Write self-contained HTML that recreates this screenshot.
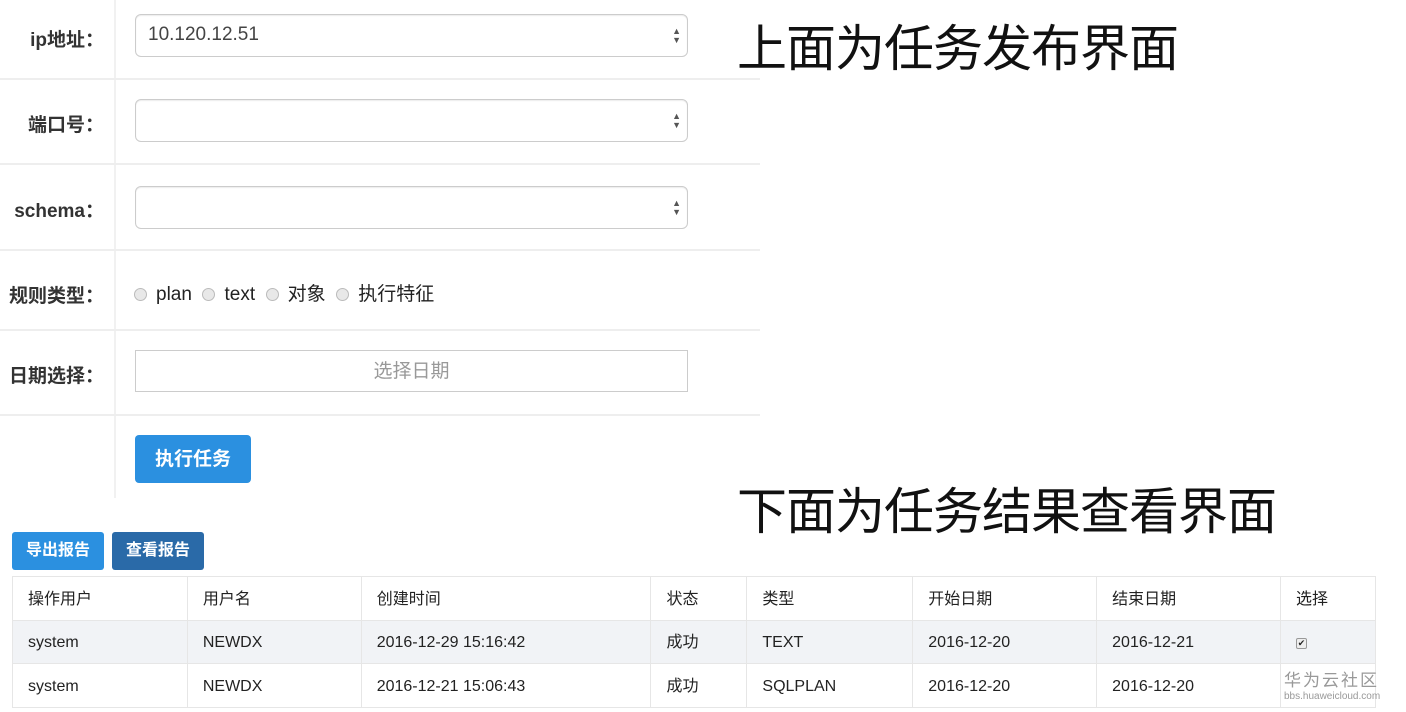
<!DOCTYPE html>
<html style="overflow:hidden;height:712px"><head><meta charset="utf-8"><style>
*{margin:0;padding:0;box-sizing:border-box}
body{width:1406px;height:712px;background:#fff;position:relative;overflow:hidden;font-family:"Liberation Sans","Noto Sans CJK SC",sans-serif;color:#333}
.a{position:absolute}
.hl{position:absolute;left:0;width:760px;height:2px;background:#eee}
.lbl{position:absolute;right:1302px;font-size:19px;font-weight:bold;color:#333;white-space:nowrap;font-family:"Noto Sans CJK SC","Liberation Sans",sans-serif;line-height:26px}
.lbl span{font-family:"Liberation Sans",sans-serif}
.sel{position:absolute;left:135px;width:553px;height:43px;border:1px solid #ccc;border-radius:6px;box-shadow:inset 0 1px 1px rgba(0,0,0,.08);font-size:19px;padding:9px 12px;color:#444}
.arr{position:absolute;right:6px;top:12px;font-size:9px;line-height:9px;color:#555}
.big{position:absolute;left:737px;font-size:50px;color:#111;white-space:nowrap;letter-spacing:-1px;line-height:60px}
.btn{position:absolute;color:#fff;font-size:16px;font-weight:bold;text-align:center;border-radius:3px}
table{position:absolute;left:12px;top:576px;border-collapse:collapse;font-size:16px;width:1364px}
td{border:1px solid #e6e6e6;padding:3px 15px 0;height:43.5px;line-height:38px;vertical-align:middle;color:#222;white-space:nowrap}
tr.s td{background:#f1f3f6}
.rd{display:inline-block;width:13px;height:13px;border-radius:50%;border:1px solid #bbb;background:#e8e8e8;vertical-align:-1px;margin-right:9px}
</style></head><body>
<div class="a" style="left:114px;top:0;width:2px;height:498px;background:#f1f1f1"></div>
<div class="hl" style="top:78px"></div><div class="hl" style="top:163px"></div><div class="hl" style="top:249px"></div><div class="hl" style="top:329px"></div><div class="hl" style="top:414px"></div>
<div class="lbl" style="top:26px"><span>ip</span>地址：</div>
<div class="lbl" style="top:111px">端口号：</div>
<div class="lbl" style="top:197px"><span>schema</span>：</div>
<div class="lbl" style="top:282px">规则类型：</div>
<div class="lbl" style="top:362px">日期选择：</div>
<div class="sel" style="top:14px">10.120.12.51<div class="arr">▲<br>▼</div></div>
<div class="sel" style="top:99px"><div class="arr">▲<br>▼</div></div>
<div class="sel" style="top:186px"><div class="arr">▲<br>▼</div></div>
<div class="a" style="left:134px;top:279px;font-size:19px;color:#222;white-space:nowrap"><span class="rd"></span>plan&nbsp; <span class="rd"></span>text&nbsp; <span class="rd"></span>对象&nbsp; <span class="rd"></span>执行特征</div>
<div class="a" style="left:135px;top:350px;width:553px;height:42px;border:1px solid #ccc;text-align:center;font-size:19px;color:#999;line-height:42px">选择日期</div>
<div class="btn" style="left:135px;top:435px;width:116px;height:48px;background:#2b90e0;font-size:19px;line-height:50px;border-radius:4px">执行任务</div>
<div class="big" style="top:19px">上面为任务发布界面</div>
<div class="big" style="top:482px">下面为任务结果查看界面</div>
<div class="btn" style="left:12px;top:532px;width:92px;height:38px;line-height:38px;background:#2b90e0">导出报告</div>
<div class="btn" style="left:112px;top:532px;width:92px;height:38px;line-height:38px;background:#2a6aa8">查看报告</div>
<table>
<colgroup><col style="width:175px"><col style="width:174px"><col style="width:290px"><col style="width:96px"><col style="width:166px"><col style="width:184px"><col style="width:184px"><col style="width:95px"></colgroup>
<tr><td>操作用户</td><td>用户名</td><td>创建时间</td><td>状态</td><td>类型</td><td>开始日期</td><td>结束日期</td><td>选择</td></tr>
<tr class="s"><td>system</td><td>NEWDX</td><td>2016-12-29 15:16:42</td><td>成功</td><td>TEXT</td><td>2016-12-20</td><td>2016-12-21</td><td><span style="display:inline-block;width:11px;height:11px;border:1px solid #999;border-radius:2px;font-size:9px;line-height:9px;text-align:center;background:#eee;vertical-align:middle">✔</span></td></tr>
<tr><td>system</td><td>NEWDX</td><td>2016-12-21 15:06:43</td><td>成功</td><td>SQLPLAN</td><td>2016-12-20</td><td>2016-12-20</td><td></td></tr>
</table>
<div class="a" style="left:1284px;top:671px;font-size:17px;color:#999;letter-spacing:2px;line-height:20px">华为云社区</div>
<div class="a" style="left:1284px;top:691px;font-size:10px;color:#999;line-height:12px">bbs.huaweicloud.com</div>
</body></html>
